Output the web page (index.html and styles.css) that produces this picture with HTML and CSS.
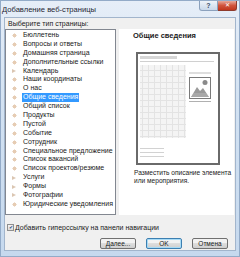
FILE: index.html
```html
<!DOCTYPE html>
<html lang="ru">
<head>
  <meta charset="UTF-8" />
  <title>Добавление веб-страницы</title>
  <link rel="stylesheet" href="styles.css">
</head>
<body>

  <div class="window">
    <div class="titlebar">
      <div class="title">Добавление веб-страницы</div>
      <div class="caption-buttons">
        <div class="cap-btn help">?</div>
        <div class="cap-btn close">&#x2715;</div>
      </div>
    </div>

    <div class="client">
      <div class="label">Выберите тип страницы:</div>

      <div class="panes">
        <ul class="page-list">
          <li><span class="ico"></span><span class="name">Бюллетень</span></li>
          <li><span class="ico"></span><span class="name">Вопросы и ответы</span></li>
          <li><span class="ico"></span><span class="name">Домашняя страница</span></li>
          <li><span class="ico"></span><span class="name">Дополнительные ссылки</span></li>
          <li><span class="ico arrow"></span><span class="name">Календарь</span></li>
          <li><span class="ico"></span><span class="name">Наши координаты</span></li>
          <li><span class="ico"></span><span class="name">О нас</span></li>
          <li class="selected"><span class="ico"></span><span class="name">Общие сведения</span></li>
          <li><span class="ico"></span><span class="name">Общий список</span></li>
          <li><span class="ico"></span><span class="name">Продукты</span></li>
          <li><span class="ico"></span><span class="name">Пустой</span></li>
          <li><span class="ico"></span><span class="name">Событие</span></li>
          <li><span class="ico"></span><span class="name">Сотрудник</span></li>
          <li><span class="ico"></span><span class="name">Специальное предложение</span></li>
          <li><span class="ico"></span><span class="name">Список вакансий</span></li>
          <li><span class="ico"></span><span class="name">Список проектов/резюме</span></li>
          <li><span class="ico arrow"></span><span class="name">Услуги</span></li>
          <li><span class="ico arrow"></span><span class="name">Формы</span></li>
          <li><span class="ico arrow"></span><span class="name">Фотографии</span></li>
          <li><span class="ico"></span><span class="name">Юридические уведомления</span></li>
        </ul>

        <div class="preview-pane">
          <div class="preview-title">Общие сведения</div>
          <svg class="preview" width="84" height="113" viewBox="0 0 84 113">
            <defs>
              <pattern id="grid" width="6" height="6" patternUnits="userSpaceOnUse">
                <rect width="6" height="6" fill="#f4f4f4"/>
                <path d="M0 0.5H6M0.5 0V6" stroke="#e3e3e3" stroke-width="1"/>
              </pattern>
            </defs>
            <rect x="1" y="1" width="82" height="111" fill="#fff" stroke="#6a6a6a" stroke-width="2"/>
            <rect x="4" y="4" width="37" height="3" fill="#d6d6d6"/>
            <rect x="4" y="9" width="74" height="1" fill="#d0d0d0"/>
            <rect x="4" y="13" width="46" height="73" fill="url(#grid)"/>
            <rect x="53" y="20" width="22" height="2" fill="#dedede"/>
            <rect x="53.5" y="25.5" width="21" height="21" fill="#fff" stroke="#7a7a7a"/>
            <circle cx="69" cy="30.5" r="2.5" fill="#8a8a8a"/>
            <path d="M55 45 L61 35 L64 39 L67 36 L73 45 Z" fill="#9a9a9a"/>
            <path d="M57 42H71M56 44H72" stroke="#cfcfcf" stroke-width="0.6"/>
            <rect x="53" y="49" width="22" height="1" fill="#b0b0b0"/>
            <rect x="4" y="96" width="24" height="1" fill="#d2d2d2"/>
            <rect x="4" y="100" width="24" height="1" fill="#d2d2d2"/>
            <rect x="4" y="104" width="24" height="1" fill="#d2d2d2"/>
          </svg>
          <p class="description">Разместить описание элемента или мероприятия.</p>
        </div>
      </div>

      <label class="nav-check">
        <span class="checkbox">&#x2714;</span>
        Добавить гиперссылку на панели навигации
      </label>

      <div class="buttons">
        <button class="btn">Далее...</button>
        <button class="btn default">OK</button>
        <button class="btn">Отмена</button>
      </div>
    </div>
  </div>

</body>
</html>
```

FILE: styles.css
```css
body {
  font-family: 'Liberation Sans', Arial, sans-serif;
  margin: 0;
  padding: 0;
  background: #fff;
  color: #1a1a1a;
}

.window {
  width: 240px;
  height: 257px;
  box-sizing: border-box;
  display: flex;
  flex-direction: column;
  background: linear-gradient(#e6eef8, #d3e2f2 40%, #c6d9ee);
  border: 1px solid #93abc8;
}

/* Title bar */
.titlebar {
  height: 16px;
  display: flex;
  align-items: flex-start;
}

.title {
  flex: 1;
  font-size: 7.6px;
  padding: 4px 0 0 1px;
  color: #1e2633;
}

.caption-buttons {
  display: flex;
  margin-right: 2px;
}

.cap-btn {
  width: 19px;
  height: 10px;
  box-sizing: border-box;
  font-size: 7px;
  line-height: 9px;
  text-align: center;
  border: 1px solid #8ba1bd;
  border-top: none;
}

.cap-btn.help {
  background: linear-gradient(#eef3f9, #c9d8ea);
  color: #3b4f69;
  border-radius: 0 0 0 3px;
  font-weight: bold;
}

.cap-btn.close {
  background: linear-gradient(#e9a99b, #d0543c 50%, #c1361d);
  color: #fff;
  border-color: #8e3a2c;
  border-left: none;
  border-radius: 0 0 3px 0;
  font-size: 6px;
}

/* Client area */
.client {
  flex: 1;
  margin: 0 3px 5px 3px;
  background: #f0f0f0;
  border: 1px solid #a2b5cc;
  padding: 1px 1px 0 0;
  display: flex;
  flex-direction: column;
}

.label {
  font-size: 7px;
  line-height: 9px;
  padding-left: 3px;
}

.panes {
  display: flex;
  gap: 3px;
  height: 186px;
  margin-top: 1px;
}

.page-list {
  width: 115px;
  box-sizing: border-box;
  margin: 0;
  padding: 1px 0 0 0;
  list-style: none;
  background: #fff;
  border: 1px solid #828790;
}

.page-list li {
  display: flex;
  align-items: center;
  height: 8.9px;
  font-size: 7px;
  padding-left: 6px;
}

.page-list .ico {
  width: 5px;
  height: 5px;
  margin-right: 6px;
  background:
    linear-gradient(#d7ab82, #d7ab82) center / 3px 3px no-repeat,
    linear-gradient(#e6cdb5, #e6cdb5) center / 5px 1px no-repeat,
    linear-gradient(#e6cdb5, #e6cdb5) center / 1px 5px no-repeat;
  opacity: 0.6;
}

.page-list .ico.arrow {
  background: none;
  width: 0;
  height: 0;
  margin-right: 7px;
  border-left: 4px solid #d2b89f;
  border-top: 2.5px solid transparent;
  border-bottom: 2.5px solid transparent;
  opacity: 0.8;
}

.page-list .name {
  padding: 0 1px;
  margin-left: -1px;
  line-height: 8.9px;
}

.page-list li.selected .name {
  background: #3399ff;
  color: #fff;
}

.preview-pane {
  flex: 1;
  background: #fff;
  padding: 2px 0 0 14px;
}

.preview-title {
  font-size: 7.5px;
  font-weight: bold;
  line-height: 9px;
}

.preview {
  display: block;
  margin: 12px 0 0 3px;
}

.description {
  margin: 4px 0 0 1px;
  font-size: 6.6px;
  line-height: 8px;
  color: #222;
  width: 100px;
}

/* Checkbox row */
.nav-check {
  display: flex;
  align-items: center;
  height: 9px;
  margin-top: 8px;
  padding-left: 2px;
  font-size: 7px;
}

.checkbox {
  width: 7px;
  height: 7px;
  box-sizing: border-box;
  margin-right: 1px;
  border: 1px solid #8e8f8f;
  background: linear-gradient(#f4f4f4, #dcdcdc);
  font-size: 5px;
  line-height: 5px;
  text-align: center;
  color: #2d4a7a;
}

/* Buttons */
.buttons {
  display: flex;
  justify-content: flex-end;
  gap: 10px;
  margin-top: 6px;
  padding-right: 6px;
}

.btn {
  width: 36px;
  height: 11px;
  padding: 0;
  font-family: inherit;
  font-size: 6.5px;
  color: #1a1a1a;
  border: 1px solid #707070;
  border-radius: 2px;
  background: linear-gradient(#f2f2f2 50%, #dddddd 50%, #cfcfcf);
}

.btn.default {
  border-color: #3c7fb1;
  box-shadow: inset 0 0 0 1px #a8dbf6;
}
```
